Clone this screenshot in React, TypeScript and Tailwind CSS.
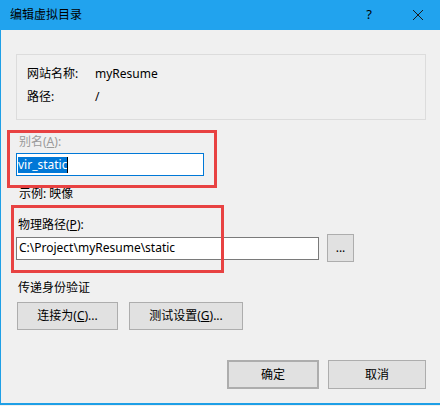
import React from 'react';

const font = { fontFamily: '"Noto Sans", "Noto Sans CJK SC", sans-serif' };

const WinButton = ({ label, className = '' }: { label: React.ReactNode; className?: string }) => (
  <div
    className={`flex items-center justify-center h-[28px] bg-[#e1e1e1] border border-[#adadad] text-[12px] text-black ${className}`}
  >
    {label}
  </div>
);

export default function App() {
  return (
    <div className="w-[440px] h-[406px] bg-[#f0f0f0] relative overflow-hidden" style={font}>
      <div className="h-[405px] border-l border-b-2 border-[#1e9fe6] flex flex-col">
        {/* title bar */}
        <div className="h-[30px] -ml-px bg-[#21a3ee] flex items-center pl-[10px] text-[12px] text-black">
          <span>编辑虚拟目录</span>
          <span className="ml-auto text-[13px] mr-[40px]">?</span>
          <svg width="12" height="12" viewBox="0 0 12 12" className="mr-[16px]">
            <path d="M1 1 L11 11 M11 1 L1 11" stroke="#1a1a1a" strokeWidth="1" />
          </svg>
        </div>

        <div className="pl-[15px] pr-[14px] text-[12px] text-black">
          {/* site info group */}
          <div className="mt-[24px] w-[410px] h-[66px] border border-[#dcdcdc] pl-[10px] pt-[11px]">
            <div className="flex h-[16px] items-center">
              <span className="w-[68px]">网站名称:</span>
              <span>myResume</span>
            </div>
            <div className="flex h-[16px] items-center mt-[7px]">
              <span className="w-[68px]">路径:</span>
              <span>/</span>
            </div>
          </div>

          <div className="mt-[14px] h-[16px] flex items-center pl-[3px] text-[#9a9a9a]">
            别名(<span className="underline">A</span>):
          </div>
          <div className="mt-[3px] w-[188px] h-[23px] bg-white border border-[#0078d7] flex items-center pl-px">
            <span className="bg-[#0078d7] text-white leading-[16px]">vir_static</span>
            <span className="w-px h-[16px] bg-black" />
          </div>

          <div className="mt-[10px] h-[16px] flex items-center pl-[3px]">示例: 映像</div>

          <div className="mt-[15px] h-[16px] flex items-center pl-[2px]">
            物理路径(<span className="underline">P</span>):
          </div>
          <div className="mt-px flex items-center gap-[8px]">
            <div className="w-[303px] h-[23px] bg-white border border-[#7a7a7a] flex items-center pl-[2px]">
              C:\Project\myResume\static
            </div>
            <WinButton label="..." className="w-[27px]" />
          </div>

          <div className="mt-[18px] h-[16px] flex items-center pl-[2px]">传递身份验证</div>
          <div className="mt-[6px] flex gap-[11px] pl-[1px]">
            <WinButton
              label={
                <span>
                  连接为(<span className="underline">C</span>)...
                </span>
              }
              className="w-[101px]"
            />
            <WinButton
              label={
                <span>
                  测试设置(<span className="underline">G</span>)...
                </span>
              }
              className="w-[114px]"
            />
          </div>

          <div className="mt-[30px] flex justify-end gap-[9px]">
            <WinButton label="确定" className="w-[92px] h-[29px] border-2 border-[#0078d7]" />
            <WinButton label="取消" className="w-[98px] h-[29px]" />
          </div>
        </div>
      </div>

      {/* red annotation boxes */}
      <div className="absolute left-[7px] top-[130px] w-[210px] h-[58px] border-[3px] border-[#e84242]" />
      <div className="absolute left-[11px] top-[205px] w-[213px] h-[68px] border-[3px] border-[#e84242]" />
    </div>
  );
}
